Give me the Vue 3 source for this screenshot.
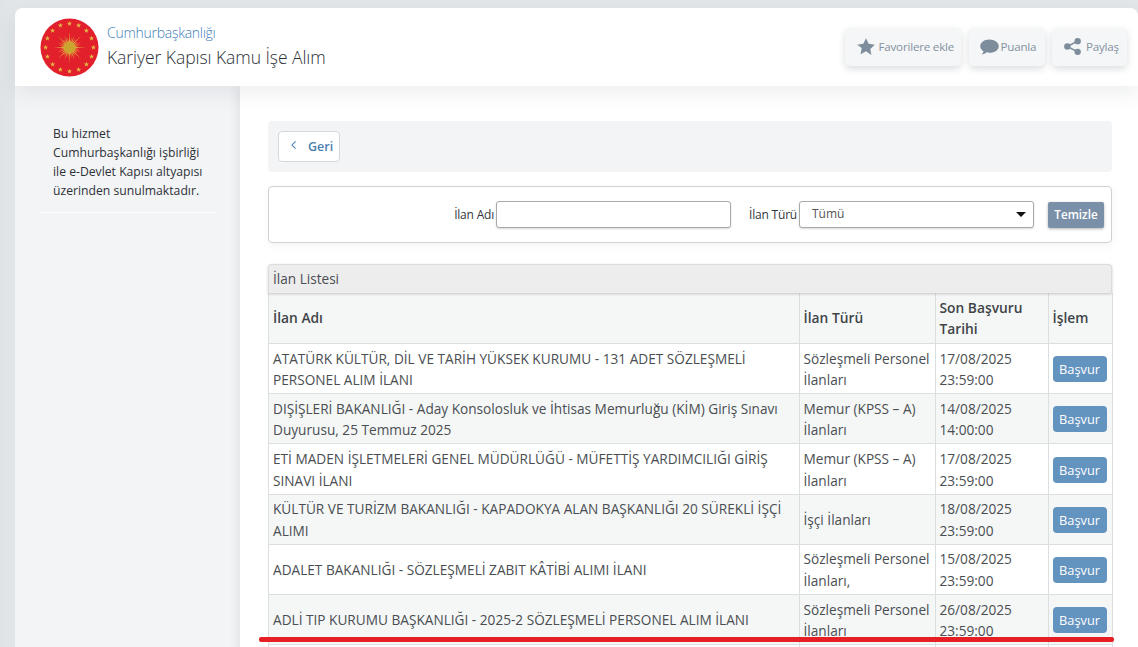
<script setup>
const cx = 30
const stars = Array.from({ length: 16 }, (_, i) => {
  const a = (i * 22.5 - 90) * Math.PI / 180
  const x = cx + 24.3 * Math.cos(a)
  const y = cx + 24.3 * Math.sin(a)
  const pts = []
  for (let k = 0; k < 10; k++) {
    const r = k % 2 ? 1.1 : 2.7
    const b = (k * 36 - 90) * Math.PI / 180
    pts.push((x + r * Math.cos(b)).toFixed(2) + ',' + (y + r * Math.sin(b)).toFixed(2))
  }
  return pts.join(' ')
})
const rays = (() => {
  const pts = []
  const n = 32
  for (let k = 0; k < n * 2; k++) {
    const long = k % 8 === 0
    const r = k % 2 ? 5 : long ? 16.5 : k % 4 === 0 ? 13.5 : 11
    const b = (k * 180 / n - 90) * Math.PI / 180
    pts.push((cx + r * Math.cos(b)).toFixed(2) + ',' + (cx + r * Math.sin(b)).toFixed(2))
  }
  return pts.join(' ')
})()
const rows = [
  { name: 'ATATÜRK KÜLTÜR, DİL VE TARİH YÜKSEK KURUMU - 131 ADET SÖZLEŞMELİ PERSONEL ALIM İLANI', type: 'Sözleşmeli Personel İlanları', date: '17/08/2025', time: '23:59:00' },
  { name: 'DIŞİŞLERİ BAKANLIĞI - Aday Konsolosluk ve İhtisas Memurluğu (KİM) Giriş Sınavı Duyurusu, 25 Temmuz 2025', type: 'Memur (KPSS – A) İlanları', date: '14/08/2025', time: '14:00:00' },
  { name: 'ETİ MADEN İŞLETMELERİ GENEL MÜDÜRLÜĞÜ - MÜFETTİŞ YARDIMCILIĞI GİRİŞ SINAVI İLANI', type: 'Memur (KPSS – A) İlanları', date: '17/08/2025', time: '23:59:00' },
  { name: 'KÜLTÜR VE TURİZM BAKANLIĞI - KAPADOKYA ALAN BAŞKANLIĞI 20 SÜREKLİ İŞÇİ ALIMI', type: 'İşçi İlanları', date: '18/08/2025', time: '23:59:00' },
  { name: 'ADALET BAKANLIĞI - SÖZLEŞMELİ ZABIT KÂTİBİ ALIMI İLANI', type: 'Sözleşmeli Personel İlanları,', date: '15/08/2025', time: '23:59:00' },
  { name: 'ADLİ TIP KURUMU BAŞKANLIĞI - 2025-2 SÖZLEŞMELİ PERSONEL ALIM İLANI', type: 'Sözleşmeli Personel İlanları', date: '26/08/2025', time: '23:59:00' }
]
</script>

<template>
  <div class="page">
    <div class="card">
      <header class="top">
        <svg class="logo" viewBox="0 0 60 60" width="59" height="59">
          <circle cx="30" cy="30" r="29.5" fill="#e2202c" />
          <polygon v-for="(s, i) in stars" :key="i" :points="s" fill="#e3b845" />
          <polygon :points="rays" fill="#dcb93f" />
          <circle cx="30" cy="30" r="5.5" fill="#c9a42f" />
        </svg>
        <div class="titles">
          <div class="sup">Cumhurbaşkanlığı</div>
          <div class="title">Kariyer Kapısı Kamu İşe Alım</div>
        </div>
        <div class="actions">
          <a class="act fav">
            <svg viewBox="1 1 22 21" width="18" height="17"><path d="M12 1.200l3.300 7 7.500 1-5.500 5.300 1.400 7.600L12 17.400l-6.700 3.700 1.400-7.600L1.200 9.200l7.500-1z" fill="#7e8d9c" /></svg>
            Favorilere ekle
          </a>
          <a class="act rate">
            <svg viewBox="0.500 2.500 23 19" width="19" height="16"><path d="M12 3C5.700 3 .8 6.500.8 11c0 2.500 1.500 4.700 3.900 6.200-.2 1.500-1 2.800-2.300 3.800 2.400-.1 4.600-1 6.200-2.500 1.100.3 2.200.4 3.400.4 6.300 0 11.200-3.500 11.200-7.900S18.300 3 12 3z" fill="#7e8d9c" /></svg>
            Puanla
          </a>
          <a class="act share">
            <svg viewBox="0.500 0.500 23 23" width="17" height="17"><g fill="#7e8d9c"><circle cx="5" cy="12" r="4.300" /><circle cx="19" cy="4.800" r="4.300" /><circle cx="19" cy="19.200" r="4.300" /></g><path d="M5 12L19 4.800M5 12l14 7.200" stroke="#7e8d9c" stroke-width="2" /></svg>
            Paylaş
          </a>
        </div>
      </header>
      <div class="body">
        <aside class="side">
          <p class="note">Bu hizmet Cumhurbaşkanlığı işbirliği ile e-Devlet Kapısı altyapısı üzerinden sunulmaktadır.</p>
        </aside>
        <main class="main">
          <div class="backbar">
            <button class="back">
              <svg viewBox="0 0 10 12" width="8" height="10"><path d="M7 1.500L2.500 6 7 10.500" fill="none" stroke="#4a7fb0" stroke-width="1.300" /></svg>
              <span>Geri</span>
            </button>
          </div>
          <div class="filter">
            <label class="lbl">İlan Adı</label>
            <input class="inp" type="text" />
            <label class="lbl second">İlan Türü</label>
            <div class="sel"><span>Tümü</span><i class="caret"></i></div>
            <button class="clear">Temizle</button>
          </div>
          <div class="list-title">İlan Listesi</div>
          <table class="tbl">
            <colgroup>
              <col class="c1" /><col class="c2" /><col class="c3" /><col class="c4" />
            </colgroup>
            <thead>
              <tr>
                <th>İlan Adı</th>
                <th>İlan Türü</th>
                <th>Son Başvuru Tarihi</th>
                <th>İşlem</th>
              </tr>
            </thead>
            <tbody>
              <tr v-for="r in rows" :key="r.name">
                <td>{{ r.name }}</td>
                <td>{{ r.type }}</td>
                <td>{{ r.date }}<br />{{ r.time }}</td>
                <td><button class="apply">Başvur</button></td>
              </tr>
              <tr class="next"><td></td><td></td><td></td><td></td></tr>
            </tbody>
          </table>
        </main>
      </div>
    </div>
    <div class="redline"></div>
  </div>
</template>

<style scoped>
.page {
  position: relative;
  height: 647px;
  overflow: hidden;
  padding: 8px 0 0 15px;
  box-sizing: border-box;
  background: linear-gradient(90deg, #dfe3e6 0, #e3e6e9 15px);
  font-family: "Open Sans", sans-serif;
  color: #3f4448;
}
.card {
  border-radius: 8px 8px 0 0;
  background: #f3f4f6;
  height: 700px;
}
.top {
  position: relative;
  z-index: 2;
  height: 78px;
  box-sizing: border-box;
  display: flex;
  align-items: center;
  padding: 0 11px 0 25px;
  background: #fff;
  border-radius: 8px 8px 0 0;
  box-shadow: 0 8px 20px rgba(40, 50, 60, 0.08);
}
.logo { flex: none; }
.titles { margin-left: 8px; }
.sup {
  font-size: 14px;
  font-weight: 300;
  line-height: 19px;
  color: #3f80b8;
  letter-spacing: -0.27px;
}
.title {
  font-size: 17.500px;
  font-weight: 300;
  line-height: 28px;
  margin-top: 1px;
  color: #2c3136;
  letter-spacing: -0.05px;
}
.actions { margin-left: auto; display: flex; gap: 7.500px; margin-top: -1px; }
.act {
  height: 38px;
  display: flex;
  align-items: center;
  box-sizing: border-box;
  gap: 3.500px;
  background: #f4f6f8;
  border-radius: 5px;
  font-size: 11.600px;
  color: #8592a0;
  letter-spacing: -0.2px;
  box-shadow: 0 3px 7px rgba(40, 50, 60, 0.16);
}
.fav { width: 116px; padding-left: 12px; }
.rate { width: 76px; padding-left: 11px; gap: 2px; }
.share { width: 75px; padding-left: 12px; gap: 5px; }
.body { display: flex; }
.side {
  width: 225px;
  flex: none;
  box-sizing: border-box;
  padding: 38px 24px 0 25px;
}
.note {
  margin: 0;
  padding: 0 10px 12px 13px;
  font-size: 12.200px;
  line-height: 19px;
  color: #2e3236;
  border-bottom: 1px solid #fff;
}
.main {
  flex: 1;
  background: #fff;
  margin-right: 0;
  padding: 35px 26px 0 28px;
  box-shadow: -4px 0 8px rgba(40, 50, 60, 0.07);
  min-width: 0;
}
.backbar {
  height: 51px;
  box-sizing: border-box;
  background: #f3f4f6;
  border-radius: 4px;
  padding: 10px;
}
.back {
  width: 62px;
  height: 31px;
  box-sizing: border-box;
  background: #fff;
  border: 1px solid #d5d8db;
  border-radius: 4px;
  padding: 0 0 0 11px;
  display: flex;
  align-items: center;
  gap: 10px;
  font: 600 12.500px "Open Sans", sans-serif;
  color: #4a7fb0;
}
.back svg { margin-top: -4px; }
.filter {
  margin-top: 14px;
  height: 57px;
  box-sizing: border-box;
  border: 1px solid #cfd1d3;
  border-radius: 4px;
  display: flex;
  align-items: center;
  justify-content: flex-end;
  padding: 0 7px 0 0;
  box-shadow: 0 3px 8px rgba(40, 50, 60, 0.05);
}
.lbl { font-size: 12px; color: #33373b; letter-spacing: -0.2px; margin-right: 2px; }
.second { margin-left: 18px; }
.inp {
  width: 235px;
  height: 27px;
  box-sizing: border-box;
  border: 1px solid #a9a9a9;
  border-radius: 3px;
  box-shadow: 0 1px 2px rgba(0, 0, 0, 0.15);
  background: #fff;
  outline: none;
}
.sel {
  width: 235px;
  height: 27px;
  box-sizing: border-box;
  border: 1px solid #a9a9a9;
  border-radius: 3px;
  box-shadow: 0 1px 2px rgba(0, 0, 0, 0.15);
  background: #fff;
  display: flex;
  align-items: center;
  padding: 0 7px 2px 12px;
  font-size: 12px;
  color: #555;
  justify-content: space-between;
}
.caret {
  width: 0;
  height: 0;
  margin-top: 2px;
  border-left: 5px solid transparent;
  border-right: 5px solid transparent;
  border-top: 5px solid #111;
}
.clear {
  margin-left: 14px;
  width: 56px;
  height: 26px;
  border: 0;
  padding: 0 0 2px;
  border-radius: 2px;
  background: #7a90a9;
  color: #fff;
  font: 600 11.700px "Open Sans", sans-serif;
  box-shadow: 0 1px 3px rgba(0, 0, 0, 0.3);
}
.list-title {
  margin-top: 21px;
  height: 29px;
  box-sizing: border-box;
  background: #ededed;
  border: 1px solid #dcdcdc;
  border-bottom: 0;
  border-radius: 4px 4px 0 0;
  padding: 0 4px;
  font-size: 13.600px;
  line-height: 28px;
  color: #4a4e52;
  box-shadow: 0 1px 3px rgba(0, 0, 0, 0.2);
  position: relative;
}
.tbl {
  width: 844px;
  table-layout: fixed;
  border-collapse: collapse;
  font-size: 13.650px;
  line-height: 21.500px;
  color: #4a4e52;
}
.c1 { width: 531px; }
.c2 { width: 136px; }
.c3 { width: 113px; }
.c4 { width: 64px; }
.tbl th, .tbl td {
  border: 1px solid #dcdfe0;
  padding: 3.600px 3.500px 2.620px;
  text-align: left;
  vertical-align: middle;
  height: 43px;
}
.tbl th:first-child, .tbl td:first-child { padding-left: 4px; }
.tbl th {
  font-weight: 600;
  font-size: 13.800px;
  background: #f5f7f7;
  color: #3f4448;
  padding-top: 3.500px;
  padding-bottom: 3.500px;
}
.tbl thead tr th { border-top: 0; }
.tbl tbody tr:nth-child(even) td { background: #f5f7f7; }
.apply {
  display: block;
  width: 54px;
  height: 26px;
  padding: 0;
  border: 0;
  border-radius: 4px;
  background: #6393bf;
  color: #fff;
  font: 500 12.800px "Open Sans", sans-serif;
}
.redline {
  position: absolute;
  left: 259px;
  top: 637px;
  width: 855px;
  height: 4.500px;
  border-radius: 2px;
  background: #e61f27;
}
</style>

<style>
html, body { margin: 0; overflow: hidden; }
</style>
